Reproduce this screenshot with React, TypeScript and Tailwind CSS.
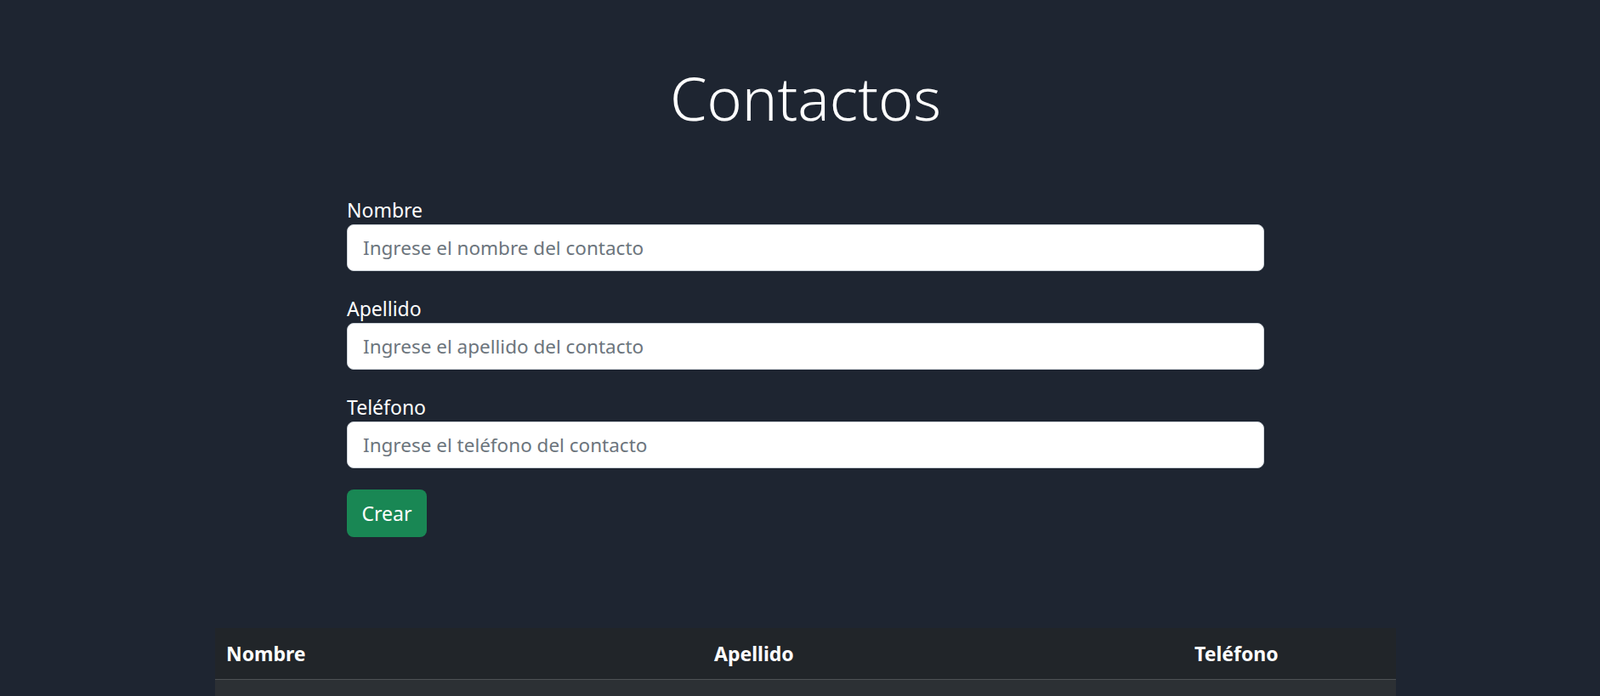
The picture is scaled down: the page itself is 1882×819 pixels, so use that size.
import { useState } from 'react';

const fields = [
  { id: 'nombre', label: 'Nombre', placeholder: 'Ingrese el nombre del contacto' },
  { id: 'apellido', label: 'Apellido', placeholder: 'Ingrese el apellido del contacto' },
  { id: 'telefono', label: 'Teléfono', placeholder: 'Ingrese el teléfono del contacto' },
];

export default function App() {
  const [values, setValues] = useState<Record<string, string>>({});

  return (
    <div className="min-h-screen w-full bg-[#1e2531] pl-[13px] font-['Noto_Sans',sans-serif] text-white">
      {/* Title */}
      <div className="pt-[80px] text-center">
        <h1 className="text-[70px] leading-none font-light">Contactos</h1>
      </div>

      {/* Form */}
      <form className="mx-auto mt-[80px] w-[1079px]" onSubmit={(e) => e.preventDefault()}>
        <div className="flex flex-col gap-[27px]">
          {fields.map((f) => (
            <div key={f.id}>
              <label htmlFor={f.id} className="block text-[23px] leading-[34px]">
                {f.label}
              </label>
              <input
                id={f.id}
                type="text"
                value={values[f.id] ?? ''}
                onChange={(e) => setValues({ ...values, [f.id]: e.target.value })}
                placeholder={f.placeholder}
                className="block h-[55px] w-full rounded-[8px] border border-[#ced4da] bg-white px-[18px] text-[22.5px] text-[#212529] placeholder:text-[#6c757d] outline-none"
              />
            </div>
          ))}
        </div>
        <button
          type="submit"
          className="mt-[25px] h-[56px] w-[94px] rounded-[8px] bg-[#198754] text-[23px] text-white"
        >
          Crear
        </button>
      </form>

      {/* Table */}
      <div className="mx-auto mt-[107px] w-[1389px]">
        <table className="w-full border-collapse text-left text-[23px]">
          <thead>
            <tr className="bg-[#212529] border-b border-[#4d5154]">
              <th className="w-[574px] px-[13px] h-[60px] font-bold">Nombre</th>
              <th className="w-[565px] px-[13px] h-[60px] font-bold">Apellido</th>
              <th className="px-[13px] h-[60px] font-bold">Teléfono</th>
            </tr>
          </thead>
          <tbody>
            <tr className="bg-[#2c3034]">
              <td className="h-[58px] px-[13px]"></td>
              <td className="h-[58px] px-[13px]"></td>
              <td className="h-[58px] px-[13px]"></td>
            </tr>
          </tbody>
        </table>
      </div>
    </div>
  );
}
